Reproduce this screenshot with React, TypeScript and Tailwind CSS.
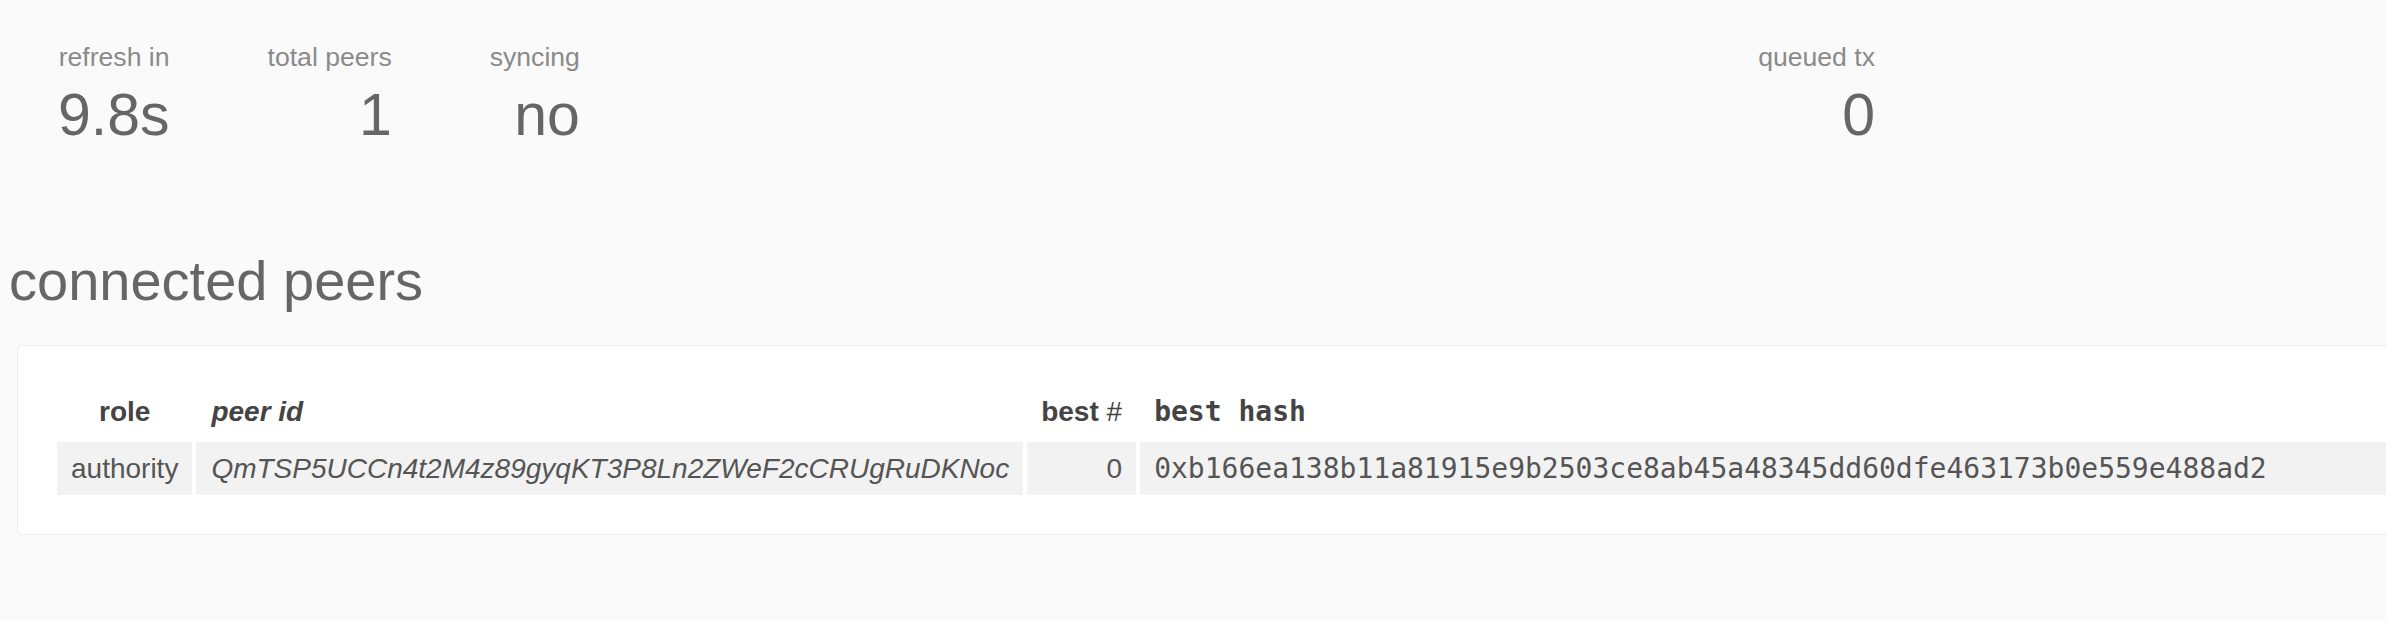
import React from "react";

const sans = "font-['Liberation_Sans',Arial,sans-serif]";

function Stat({ label, value }: { label: string; value: string }) {
  return (
    <div className="flex flex-col items-end text-right">
      <div className="text-[26.6px] leading-[30px] text-[#8a8a8a]">{label}</div>
      <div className="mt-[11px] text-[59px] leading-[64px] text-[#666666]">{value}</div>
    </div>
  );
}

export default function App() {
  return (
    <div className={`${sans} min-h-[620px] w-full overflow-hidden bg-[#fafafa]`}>
      <div className="flex w-[1875px] pl-[58px] pt-[42px]">
        <div className="flex gap-[98px]">
          <Stat label="refresh in" value="9.8s" />
          <Stat label="total peers" value="1" />
          <Stat label="syncing" value="no" />
        </div>
        <div className="ml-auto">
          <Stat label="queued tx" value="0" />
        </div>
      </div>

      <h2 className="mt-[102px] pl-[9px] text-[56px] leading-[64px] font-normal text-[#666666]">
        connected peers
      </h2>

      <div className="ml-[17px] mt-[32px] w-[2500px] rounded-[5px] border border-[#ececec] bg-white px-[35px] pt-[35px] pb-[35px]">
        <table className="w-full border-separate border-spacing-[4px] text-[28px] leading-[33px]">
          <thead>
            <tr className="text-[#444444]">
              <th className="w-px whitespace-nowrap px-[14px] py-[10px] text-center font-bold">role</th>
              <th className="w-px whitespace-nowrap pl-[15px] pr-[14px] py-[10px] text-left font-bold italic">peer id</th>
              <th className="w-px whitespace-nowrap px-[14px] py-[10px] text-right">
                <span className="font-bold">best</span> <span className="font-normal">#</span>
              </th>
              <th className="px-[14px] py-[10px] text-left font-bold font-['DejaVu_Sans_Mono',monospace]">
                best hash
              </th>
            </tr>
          </thead>
          <tbody>
            <tr className="text-[#555555]">
              <td className="whitespace-nowrap bg-[#f2f2f2] px-[14px] py-[10px] text-center">authority</td>
              <td className="whitespace-nowrap bg-[#f2f2f2] pl-[15px] pr-[14px] py-[10px] text-left italic">
                QmTSP5UCCn4t2M4z89gyqKT3P8Ln2ZWeF2cCRUgRuDKNoc
              </td>
              <td className="whitespace-nowrap bg-[#f2f2f2] px-[14px] py-[10px] text-right">0</td>
              <td className="whitespace-nowrap bg-[#f2f2f2] px-[14px] py-[10px] text-left font-['DejaVu_Sans_Mono',monospace]">
                0xb166ea138b11a81915e9b2503ce8ab45a48345dd60dfe463173b0e559e488ad2
              </td>
            </tr>
          </tbody>
        </table>
      </div>
    </div>
  );
}
